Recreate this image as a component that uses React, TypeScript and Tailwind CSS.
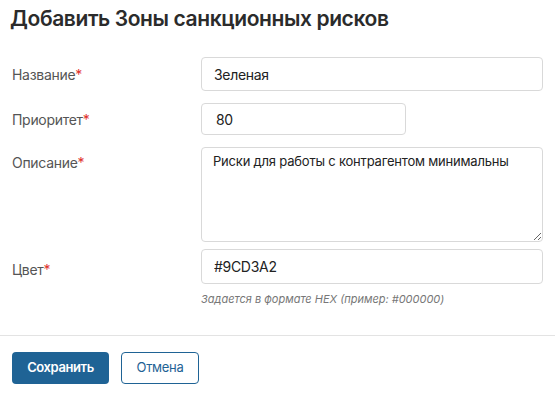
import React from 'react';

const FONT = { fontFamily: 'Inter, "Noto Sans", sans-serif' };

function Label({ text }: { text: string }) {
  return (
    <span className="text-[14px] tracking-[-0.3px] text-[#555]">
      {text}
      <span className="text-[#e0322b]">*</span>
    </span>
  );
}

export default function App() {
  return (
    <div className="w-[555px] h-[394px] bg-white overflow-hidden" style={FONT}>
      <h1 className="pl-[10px] pt-[4px] text-[21px] leading-[30px] font-semibold tracking-[-0.4px] text-[#2b2b2b]">
        Добавить Зоны санкционных рисков
      </h1>

      <div className="pl-[12px] pt-[23px]">
        <div className="flex items-center">
          <div className="w-[189px]">
            <Label text="Название" />
          </div>
          <input
            defaultValue="Зеленая"
            className="w-[342px] h-[34px] px-[12px] rounded-[4px] border border-[#d9d9d9] text-[14px] tracking-[-0.3px] text-[#222] outline-none"
          />
        </div>

        <div className="flex items-center mt-[12px]">
          <div className="w-[189px]">
            <Label text="Приоритет" />
          </div>
          <input
            defaultValue="80"
            className="w-[205px] h-[32px] px-[14px] rounded-[4px] border border-[#d9d9d9] text-[14px] tracking-[-0.3px] text-[#222] outline-none"
          />
        </div>

        <div className="flex items-start mt-[12px]">
          <div className="w-[189px] pt-[3px]">
            <Label text="Описание" />
          </div>
          <textarea
            defaultValue="Риски для работы с контрагентом минимальны"
            className="block w-[342px] h-[95px] px-[11px] pt-[3px] pb-[6px] rounded-[4px] border border-[#d9d9d9] text-[13px] leading-[20px] tracking-[-0.2px] text-[#222] outline-none"
          />
        </div>

        <div className="flex items-center mt-[7px]">
          <div className="w-[189px] pt-[4px]">
            <Label text="Цвет" />
          </div>
          <input
            defaultValue="#9CD3A2"
            className="w-[342px] h-[35px] px-[12px] rounded-[4px] border border-[#d9d9d9] text-[14px] tracking-[-0.3px] text-[#222] outline-none"
          />
        </div>

        <div className="pl-[189px] mt-[8px] text-[11px] leading-[14px] italic text-[#777]">
          Задается в формате HEX (пример: #000000)
        </div>
      </div>

      <div className="mt-[29px] border-t border-[#e3e3e3]" />

      <div className="flex gap-[12px] pl-[12px] pt-[16px]">
        <button className="w-[97px] h-[32px] rounded-[4px] bg-[#1f6395] text-white text-[13px] font-semibold tracking-[-0.4px]">
          Сохранить
        </button>
        <button className="w-[78px] h-[32px] rounded-[4px] border border-[#1f6395] bg-white text-[#1f6395] text-[13px] tracking-[-0.3px]">
          Отмена
        </button>
      </div>
    </div>
  );
}
